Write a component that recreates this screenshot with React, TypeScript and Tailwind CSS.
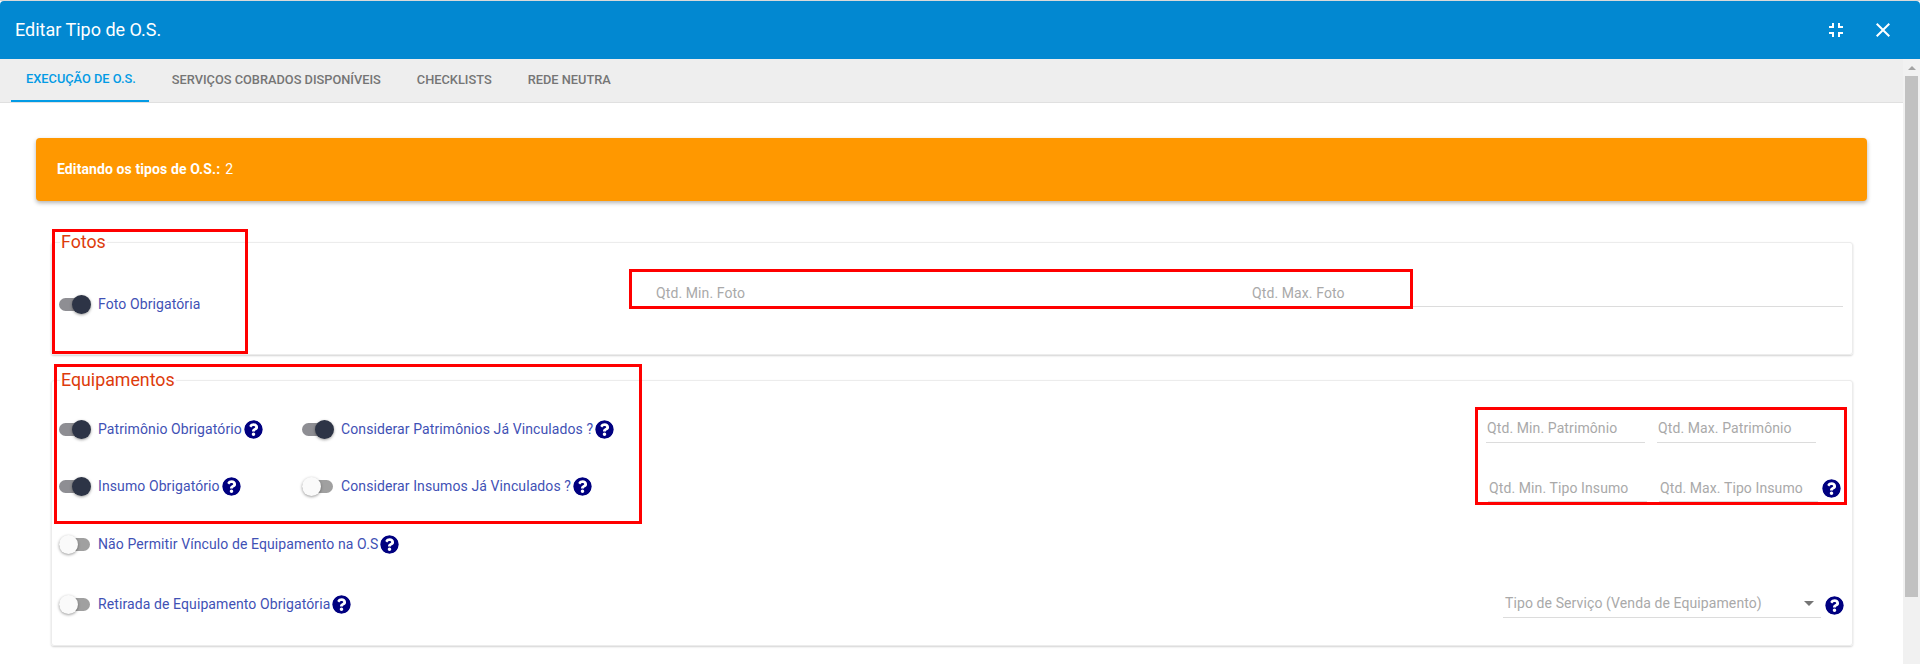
import React from 'react';
import { FaQuestionCircle } from 'react-icons/fa';

function Help({ className = '' }: { className?: string }) {
  return <FaQuestionCircle className={`shrink-0 text-[#000080] bg-white rounded-full ${className}`} size={19} />;
}

function Toggle({ on = false }: { on?: boolean }) {
  return (
    <div className="relative w-[31px] h-[18px] shrink-0">
      <div className={`absolute left-0 right-0 top-[3px] h-[13px] rounded-full ${on ? 'bg-[#8e8e93]' : 'bg-[#a0a0a0]'}`} />
      <div
        className={`absolute top-0 w-[19px] h-[19px] rounded-full shadow-[0_1px_3px_rgba(0,0,0,0.4)] ${
          on ? 'right-[-1px] bg-[#2d3446]' : 'left-0 bg-[#fafafa]'
        }`}
      />
    </div>
  );
}

function ToggleField({ label, on, help, className = '' }: { label: string; on?: boolean; help?: boolean; className?: string }) {
  return (
    <div className={`flex items-center ${className}`}>
      <Toggle on={on} />
      <span className="ml-[8px] text-sm tracking-[0.1px] text-[#3f51b5] whitespace-nowrap">{label}</span>
      {help && <Help className="ml-[2px]" />}
    </div>
  );
}

function QtyField({ label, className = '' }: { label: string; className?: string }) {
  return (
    <div className={`flex items-center h-[28px] w-[159px] border-b border-[#dcdcdc] pl-[1px] text-sm tracking-[0.1px] text-[#a9a9a9] whitespace-nowrap ${className}`}>
      {label}
    </div>
  );
}

function Legend({ children }: { children: React.ReactNode }) {
  return <legend className="ml-[8px] px-px text-[17.8px] leading-6 text-[#dd3b0b]">{children}</legend>;
}

const fieldsetClass = 'border border-[#ececec] rounded-[3px] shadow-[0_1px_2px_rgba(0,0,0,0.18)]';

export default function App() {
  return (
    <div className="relative h-screen w-full overflow-hidden bg-white border-t border-[#d9d9d9] font-['Roboto',sans-serif]">
      <header className="h-[58px] flex items-center justify-between bg-[#0288d1] rounded-t-[4px] pl-[15px] pr-[25px] text-white">
        <h1 className="text-lg font-normal">Editar Tipo de O.S.</h1>
        <div className="flex items-center gap-[23px]">
          <svg width="24" height="24" viewBox="0 0 24 24" fill="currentColor">
            <path d="M5 16h3v3h2v-5H5v2zm3-8H5v2h5V5H8v3zm6 11h2v-3h3v-2h-5v5zm2-11V5h-2v5h5V8h-3z" />
          </svg>
          <svg width="24" height="24" viewBox="0 0 24 24" fill="currentColor">
            <path d="M19 6.41L17.59 5 12 10.59 6.41 5 5 6.41 10.59 12 5 17.59 6.41 19 12 13.41 17.59 19 19 17.59 13.41 12z" />
          </svg>
        </div>
      </header>

      <div className="flex h-[605px]">
        <main className="flex-1 min-w-0">
          <nav className="h-[44px] flex pl-[11px] bg-[#eeeeee] border-b border-[#e0e0e0] text-[12.8px] font-medium text-[#757575] uppercase">
            <div className="h-[43px] flex items-center pb-[2px] pl-[15px] pr-[13px] mr-[8px] text-[#039be5] border-b-2 border-[#039be5]">Execução de O.S.</div>
            <div className="h-[43px] flex items-center pb-[2px] px-[15px] mr-[6px]">Serviços Cobrados Disponíveis</div>
            <div className="h-[43px] flex items-center pb-[2px] px-[15px] mr-[6px]">Checklists</div>
            <div className="h-[43px] flex items-center pb-[2px] px-[15px]">Rede Neutra</div>
          </nav>

          <div className="pt-[35px] px-[36px]">
            <div className="h-[63px] flex items-center pl-[21px] pb-[2px] bg-[#ff9800] rounded-[4px] shadow-[0_2px_4px_rgba(0,0,0,0.3)] text-sm text-white">
              <b className="font-bold tracking-[0.1px]">Editando os tipos de O.S.:</b>
              <span className="ml-[5px]">2</span>
            </div>

            <fieldset className={`mt-[29px] ml-[15px] mr-[14px] ${fieldsetClass}`}>
              <Legend>Fotos</Legend>
              <div className="h-[100px] flex items-center pl-[7px] pr-[9px]">
                <ToggleField label="Foto Obrigatória" on className="w-[573px]" />
                <div className="flex-1 flex h-[28px] mb-[22px] border-b border-[#dcdcdc] text-sm tracking-[0.1px] text-[#a9a9a9]">
                  <div className="w-[596px] pl-[24px] flex items-center">Qtd. Min. Foto</div>
                  <div className="flex-1 pl-[24px] flex items-center">Qtd. Max. Foto</div>
                </div>
              </div>
            </fieldset>

            <fieldset className={`mt-[13px] ml-[15px] mr-[14px] ${fieldsetClass}`}>
              <Legend>Equipamentos</Legend>

              <div className="pt-[8px] pb-[11px] pl-[7px] pr-[11px]">
                <div className="h-[58px] flex items-center justify-between">
                  <div className="flex items-center">
                    <ToggleField label="Patrimônio Obrigatório" on help className="w-[243px]" />
                    <ToggleField label="Considerar Patrimônios Já Vinculados ?" on help />
                  </div>
                  <div className="flex gap-[12px] mb-[1px] mr-[25px]">
                    <QtyField label="Qtd. Min. Patrimônio" />
                    <QtyField label="Qtd. Max. Patrimônio" />
                  </div>
                </div>

                <div className="h-[56px] flex items-center justify-between">
                  <div className="flex items-center">
                    <ToggleField label="Insumo Obrigatório" on help className="w-[243px]" />
                    <ToggleField label="Considerar Insumos Já Vinculados ?" help />
                  </div>
                  <div className="flex items-center mt-[4px]">
                    <QtyField label="Qtd. Min. Tipo Insumo" className="mr-[12px]" />
                    <QtyField label="Qtd. Max. Tipo Insumo" />
                    <Help className="ml-[4px]" />
                  </div>
                </div>

                <div className="h-[60px] flex items-center">
                  <ToggleField label="Não Permitir Vínculo de Equipamento na O.S" help />
                </div>

                <div className="h-[60px] flex items-center justify-between">
                  <ToggleField label="Retirada de Equipamento Obrigatória" help />
                  <div className="flex items-center -mr-[3px]">
                    <div className="w-[318px] h-[28px] mb-[1px] flex items-center justify-between pl-[2px] pr-[7px] border-b border-[#dcdcdc] text-sm tracking-[0.1px] text-[#a9a9a9]">
                      <span>Tipo de Serviço (Venda de Equipamento)</span>
                      <div className="w-0 h-0 border-x-[5px] border-x-transparent border-t-[5px] border-t-[#757575]" />
                    </div>
                    <Help className="ml-[4px] mt-[3px]" />
                  </div>
                </div>
              </div>
            </fieldset>
          </div>
        </main>

        <div className="w-[17px] shrink-0 flex flex-col items-center bg-[#f1f1f1]">
          <div className="h-[17px] flex items-center justify-center">
            <div className="w-0 h-0 border-x-[4px] border-x-transparent border-b-[4px] border-b-[#a3a3a3]" />
          </div>
          <div className="w-[13px] h-[521px] bg-[#c1c1c1]" />
        </div>
      </div>

      {/* red annotation boxes drawn on the screenshot */}
      <div className="absolute left-[52px] top-[228px] w-[196px] h-[125px] border-[3px] border-[#ff0000]" />
      <div className="absolute left-[54px] top-[363px] w-[588px] h-[160px] border-[3px] border-[#ff0000]" />
      <div className="absolute left-[629px] top-[268px] w-[784px] h-[40px] border-[3px] border-[#ff0000]" />
      <div className="absolute left-[1475px] top-[406px] w-[372px] h-[98px] border-[3px] border-[#ff0000]" />
    </div>
  );
}
